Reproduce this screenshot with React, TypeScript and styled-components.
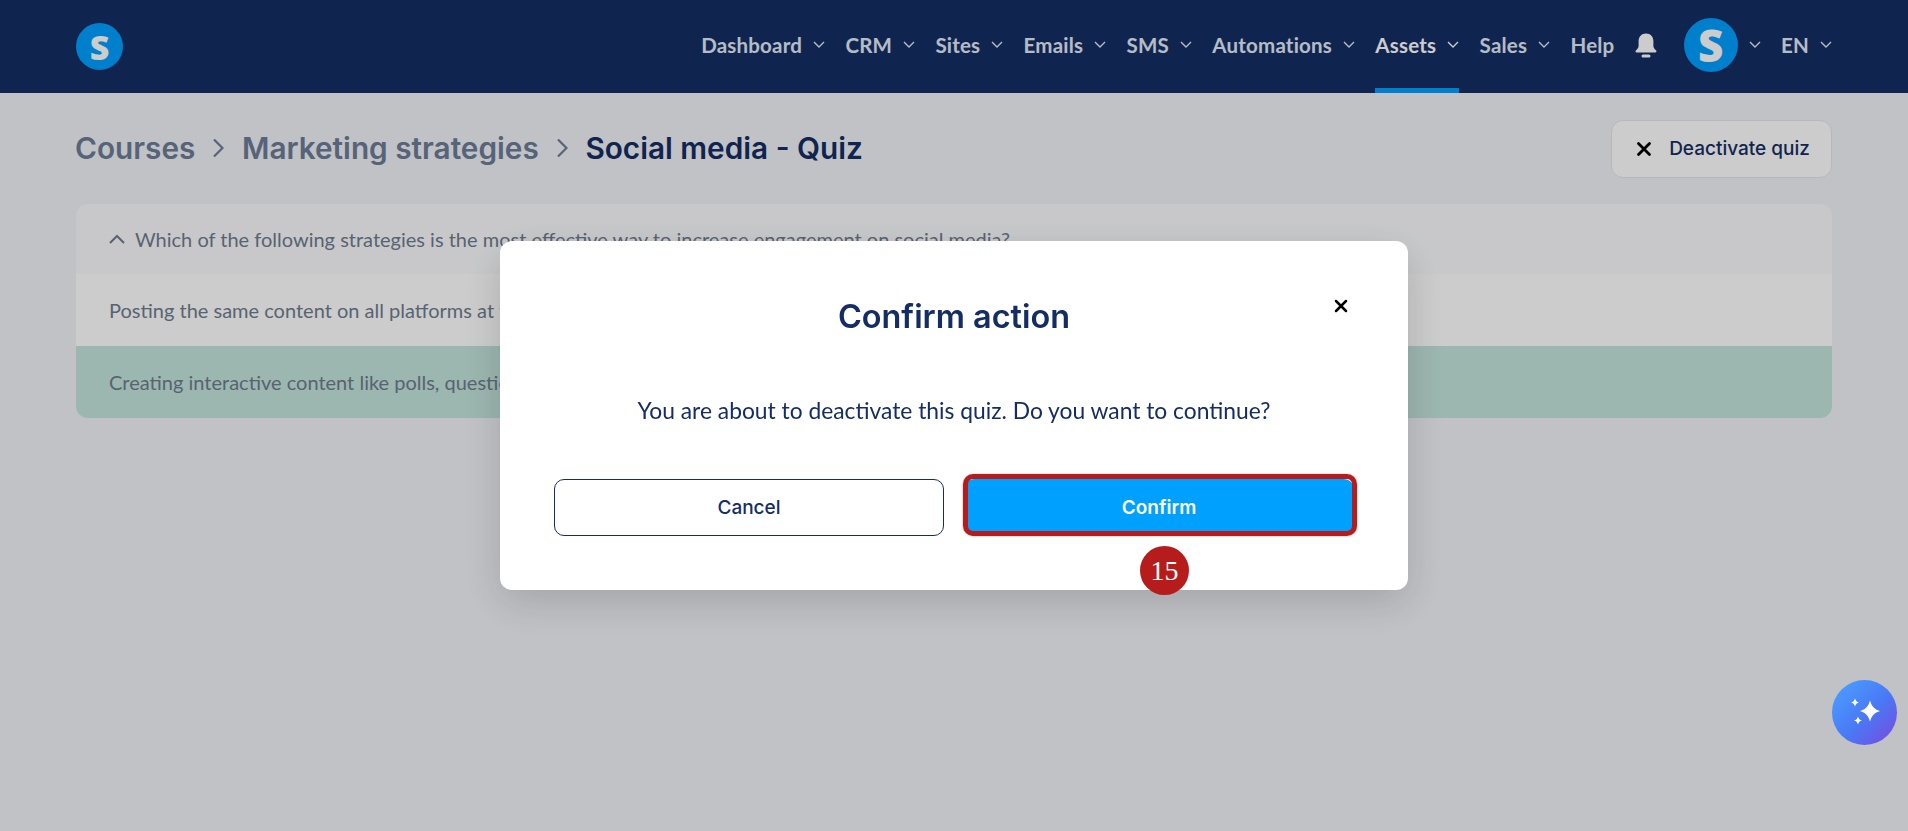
import styled, { createGlobalStyle } from 'styled-components'
import { X } from 'lucide-react'

const GlobalStyle = createGlobalStyle`
  html, body {
    margin: 0;
    padding: 0;
    height: 100%;
    overflow: hidden;
    background: #f1f3f8;
  }
  * {
    box-sizing: border-box;
  }
`

const Page = styled.div`
  width: 1908px;
  height: 831px;
  background: #f1f3f8;
  font-family: 'Lato', sans-serif;
`

const Header = styled.header`
  height: 93px;
  background: #152d65;
  padding: 0 76px;
  display: flex;
  align-items: center;
  justify-content: space-between;
`

const Logo = styled.div<{ $size: number; $font: number }>`
  width: ${(p) => p.$size}px;
  height: ${(p) => p.$size}px;
  border-radius: 50%;
  background: #00a0ff;
  color: #ffffff;
  display: flex;
  align-items: center;
  justify-content: center;
  font-family: 'Open Sans', sans-serif;
  font-weight: 800;
  font-size: ${(p) => p.$font}px;
  line-height: 1;
`

const Nav = styled.nav`
  display: flex;
  align-items: center;
  height: 93px;
`

const NavItem = styled.div<{ $active?: boolean; $last?: boolean }>`
  position: relative;
  height: 93px;
  padding-bottom: 3px;
  display: flex;
  align-items: center;
  gap: 11px;
  margin-right: ${(p) => (p.$last ? 0 : 20.3)}px;
  font-size: 20.5px;
  font-weight: 700;
  letter-spacing: 0.2px;
  white-space: nowrap;
  color: ${(p) => (p.$active ? '#ffffff' : '#e2ecf8')};

  &::after {
    content: '';
    display: ${(p) => (p.$active ? 'block' : 'none')};
    position: absolute;
    left: 0;
    right: 0;
    bottom: 0;
    height: 5px;
    background: #00a0ff;
  }
`

const Chevron = styled.svg`
  width: 12px;
  height: 7px;
  fill: none;
  stroke: currentColor;
  stroke-width: 1.4;
  margin-bottom: 2px;
`

const BellIcon = styled.svg`
  width: 24px;
  height: 25px;
  fill: #ffffff;
  margin: 0 26px 3px -1px;
`

const Breadcrumbs = styled.div`
  display: flex;
  align-items: center;
  gap: 17.8px;
  margin: 0 0 2px -1px;
  font-family: 'Inter', sans-serif;
  font-size: 29.75px;
  font-weight: 600;
  color: #6c7c97;
`

const CurrentCrumb = styled.span`
  color: #152d65;
`

const CrumbArrow = styled.svg`
  width: 11px;
  height: 20px;
  fill: none;
  stroke: #6c7c97;
  stroke-width: 2.2;
`

const Content = styled.main`
  padding: 27px 76px 0;
`

const TitleRow = styled.div`
  display: flex;
  align-items: center;
  justify-content: space-between;
  height: 57px;
  margin-bottom: 27px;
`

const OutlineButton = styled.button`
  width: 221px;
  height: 58px;
  display: flex;
  align-items: center;
  justify-content: center;
  gap: 14px;
  background: #ffffff;
  border: 1.5px solid #e6e7ec;
  border-radius: 12px;
  font-family: 'Inter', sans-serif;
  font-size: 19px;
  font-weight: 500;
  color: #152d65;
  padding: 0;
`

const Accordion = styled.section`
  border-radius: 12px;
  overflow: hidden;
`

const QuestionRow = styled.div`
  height: 70px;
  background: #fafbfe;
  display: flex;
  align-items: center;
  gap: 10px;
  padding-left: 33px;
  color: #6f7c8f;
  font-size: 20px;
`

const AnswerRow = styled.div<{ $correct?: boolean }>`
  height: 72px;
  display: flex;
  align-items: center;
  padding-left: 33px;
  color: #6f7c8f;
  font-size: 20px;
  background: ${(p) => (p.$correct ? '#c3e4dc' : '#ffffff')};
`

const UpChevron = styled.svg`
  width: 16px;
  height: 10px;
  fill: none;
  stroke: #6f7c8f;
  stroke-width: 2;
`

const Overlay = styled.div`
  position: fixed;
  inset: 0;
  background: rgba(0, 0, 0, 0.2);
  display: flex;
  align-items: center;
  justify-content: center;
`

const Modal = styled.div`
  position: relative;
  width: 908px;
  height: 349px;
  padding: 56px 54px 54px;
  background: #ffffff;
  border-radius: 12px;
  box-shadow: 0 12px 40px rgba(0, 0, 0, 0.16);
`

const ModalTitle = styled.h2`
  margin: 0;
  height: 40px;
  line-height: 40px;
  text-align: center;
  font-family: 'Inter', sans-serif;
  font-size: 32.4px;
  font-weight: 600;
  color: #152d65;
`

const CloseButton = styled.div`
  position: absolute;
  top: 55px;
  right: 57px;
  width: 20px;
  height: 20px;
  color: #000000;
  display: flex;
`

const ModalText = styled.p`
  margin: 59px 0 55px;
  height: 28px;
  line-height: 28px;
  text-align: center;
  font-size: 22.8px;
  color: #152d65;
`

const ModalActions = styled.div`
  display: grid;
  grid-template-columns: 1fr 1fr;
  gap: 20px;
`

const ActionButton = styled.button<{ $primary?: boolean }>`
  position: relative;
  height: 57px;
  padding: 0;
  border-radius: 10px;
  border: ${(p) => (p.$primary ? 'none' : '1px solid #152d65')};
  background: ${(p) => (p.$primary ? '#00a0ff' : '#ffffff')};
  color: ${(p) => (p.$primary ? '#ffffff' : '#152d65')};
  font-family: 'Inter', sans-serif;
  font-size: 19px;
  font-weight: ${(p) => (p.$primary ? 600 : 500)};
`

const Highlight = styled.span`
  position: absolute;
  top: -5px;
  left: -1px;
  right: -3px;
  bottom: 0;
  border: 5px solid #b71c1c;
  border-radius: 10px;
  box-shadow: 0 0 2px rgba(0, 0, 0, 0.4);
`

const StepBadge = styled.span`
  position: absolute;
  top: 67px;
  left: 176px;
  width: 49px;
  height: 49px;
  border-radius: 50%;
  background: #b71c1c;
  color: #ffffff;
  display: flex;
  align-items: center;
  justify-content: center;
  font-family: 'Liberation Serif', serif;
  font-size: 28px;
  font-weight: 400;
`

const AssistantButton = styled.div`
  position: fixed;
  left: 1832px;
  top: 680px;
  width: 65px;
  height: 65px;
  border-radius: 50%;
  background: linear-gradient(135deg, #4a9bff 10%, #4a78f5 55%, #7a48dd 100%);
  display: flex;
  align-items: center;
  justify-content: center;
`

const navItems = ['Dashboard', 'CRM', 'Sites', 'Emails', 'SMS', 'Automations', 'Assets', 'Sales']

const DownChevron = () => (
  <Chevron viewBox="0 0 12 7">
    <polyline points="1,1 6,6 11,1" />
  </Chevron>
)

function App() {
  return (
    <>
      <GlobalStyle />
      <Page>
        <Header>
          <Logo $size={47} $font={34}>S</Logo>
          <Nav>
            {navItems.map((item) => (
              <NavItem key={item} $active={item === 'Assets'}>
                {item}
                <DownChevron />
              </NavItem>
            ))}
            <NavItem>Help</NavItem>
            <BellIcon viewBox="0 0 24 25">
              <path d="M12 0.5c-4.6 0-7.4 3.4-7.4 7.6v4.6c0 2-1.2 3.4-2.6 4.6-.9.8-.5 2.2.8 2.2h18.4c1.3 0 1.700-1.400.8-2.200-1.400-1.200-2.600-2.600-2.600-4.600V8.100c0-4.200-2.800-7.600-7.400-7.600z" />
              <rect x="7.500" y="21.500" width="9" height="3" rx="1.500" />
            </BellIcon>
            <NavItem>
              <Logo $size={54} $font={44}>S</Logo>
              <DownChevron />
            </NavItem>
            <NavItem $last>
              EN
              <DownChevron />
            </NavItem>
          </Nav>
        </Header>
        <Content>
          <TitleRow>
            <Breadcrumbs>
              <span>Courses</span>
              <CrumbArrow viewBox="0 0 11 20">
                <polyline points="1,1.500 9.500,10 1,18.500" />
              </CrumbArrow>
              <span>Marketing strategies</span>
              <CrumbArrow viewBox="0 0 11 20">
                <polyline points="1,1.500 9.500,10 1,18.500" />
              </CrumbArrow>
              <CurrentCrumb>Social media - Quiz</CurrentCrumb>
            </Breadcrumbs>
            <OutlineButton>
              <X size={22} strokeWidth={3} color="#000000" />
              Deactivate quiz
            </OutlineButton>
          </TitleRow>
          <Accordion>
            <QuestionRow>
              <UpChevron viewBox="0 0 16 10">
                <polyline points="1,9 8,2 15,9" />
              </UpChevron>
              Which of the following strategies is the most effective way to increase engagement on social media?
            </QuestionRow>
            <AnswerRow>Posting the same content on all platforms at the same time</AnswerRow>
            <AnswerRow $correct>Creating interactive content like polls, questions and quizzes</AnswerRow>
          </Accordion>
        </Content>
        <Overlay>
          <Modal>
            <ModalTitle>Confirm action</ModalTitle>
            <CloseButton>
              <X size={20} strokeWidth={3} />
            </CloseButton>
            <ModalText>You are about to deactivate this quiz. Do you want to continue?</ModalText>
            <ModalActions>
              <ActionButton>Cancel</ActionButton>
              <ActionButton $primary>
                Confirm
                <Highlight />
                <StepBadge>15</StepBadge>
              </ActionButton>
            </ModalActions>
          </Modal>
        </Overlay>
        <AssistantButton>
          <svg width="65" height="65" viewBox="0 0 65 65" fill="#ffffff">
            <path d="M38 20.500c1.800 6 4.300 8.700 10 10.500-5.700 1.800-8.200 4.500-10 10.500-1.800-6-4.300-8.700-10-10.500 5.700-1.800 8.200-4.500 10-10.500z" />
            <path d="M23 18.500c.8 2.500 1.500 3.200 4 4-2.500.8-3.200 1.500-4 4-.8-2.500-1.500-3.200-4-4 2.500-.8 3.200-1.500 4-4z" />
            <path d="M26 36.500c.8 2.500 1.500 3.200 4 4-2.500.8-3.200 1.500-4 4-.8-2.500-1.500-3.200-4-4 2.500-.8 3.200-1.500 4-4z" />
          </svg>
        </AssistantButton>
      </Page>
    </>
  )
}

export default App
